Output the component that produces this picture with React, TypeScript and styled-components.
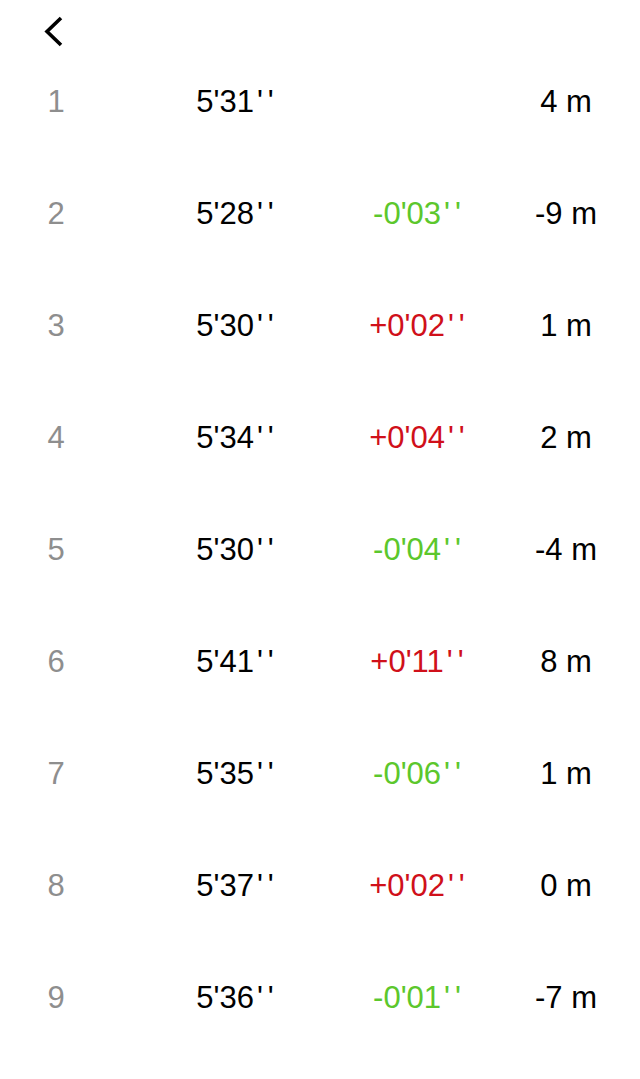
import React from "react";
import styled, { createGlobalStyle } from "styled-components";

const Global = createGlobalStyle`
  html, body { margin: 0; padding: 0; background: #fff; }
  body { font-family: "Liberation Sans", Arial, sans-serif; }
`;

const Page = styled.div`
  width: 640px;
  background: #fff;
`;

const Header = styled.div`
  height: 45px;
  display: flex;
  align-items: flex-start;
  padding-left: 42px;
  padding-top: 14px;
  box-sizing: border-box;
`;

const BackButton = styled.button`
  border: 0;
  background: none;
  padding: 0;
  width: 24px;
  height: 36px;
  display: flex;
  cursor: pointer;
`;

const Row = styled.div`
  height: 112px;
  display: grid;
  grid-template-columns: 112px 246px 118px 1fr;
  align-items: center;
  font-size: 31px;
  line-height: 1;
  color: #000;
`;

const Cell = styled.div<{ $tone?: "muted" | "up" | "down"; $pad?: number }>`
  text-align: center;
  white-space: pre;
  padding-left: ${(p) => p.$pad ?? 0}px;
  color: ${(p) =>
    p.$tone === "muted" ? "#8e8e8e" : p.$tone === "up" ? "#d0101a" : p.$tone === "down" ? "#5cc72c" : "#000"};
`;

const Seconds = styled.span`
  letter-spacing: 5px;
  padding-left: 3px;
  margin-right: -5px;
  font-weight: 300;
`;

const Time = ({ value }: { value: string }) => {
  if (!value) return null;
  const base = value.replace(/''$/, "");
  return (
    <>
      {base}
      <Seconds>''</Seconds>
    </>
  );
};

const rows = [
  { pace: "5'31''", diff: "", elev: "4 m" },
  { pace: "5'28''", diff: "-0'03''", elev: "-9 m" },
  { pace: "5'30''", diff: "+0'02''", elev: "1 m" },
  { pace: "5'34''", diff: "+0'04''", elev: "2 m" },
  { pace: "5'30''", diff: "-0'04''", elev: "-4 m" },
  { pace: "5'41''", diff: "+0'11''", elev: "8 m" },
  { pace: "5'35''", diff: "-0'06''", elev: "1 m" },
  { pace: "5'37''", diff: "+0'02''", elev: "0 m" },
  { pace: "5'36''", diff: "-0'01''", elev: "-7 m" },
];

export default function App() {
  return (
    <Page>
      <Global />
      <Header>
        <BackButton aria-label="back">
          <svg width="24" height="36" viewBox="0 0 24 36">
            <polyline points="19,4 5,17.5 19,31" fill="none" stroke="#000" strokeWidth="3.6" strokeLinecap="butt" strokeLinejoin="miter" />
          </svg>
        </BackButton>
      </Header>
      {rows.map((r, i) => (
        <Row key={i}>
          <Cell $tone="muted">{i + 1}</Cell>
          <Cell>
            <Time value={r.pace} />
          </Cell>
          <Cell $tone={r.diff.startsWith("+") ? "up" : "down"}>
            <Time value={r.diff} />
          </Cell>
          <Cell $pad={16}>{r.elev}</Cell>
        </Row>
      ))}
    </Page>
  );
}
